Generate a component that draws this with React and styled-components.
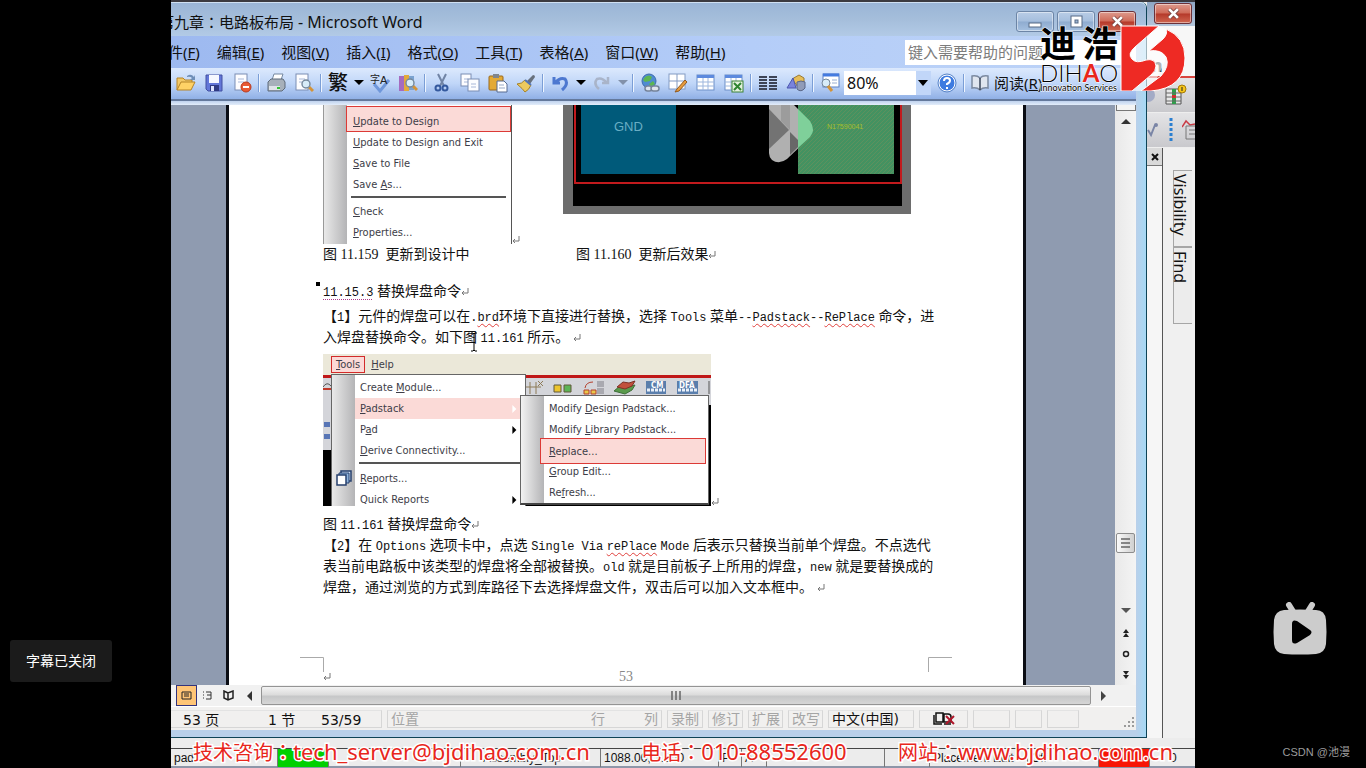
import React from 'react';
import styled, { createGlobalStyle, css } from 'styled-components';

const GlobalStyle = createGlobalStyle`
  * { box-sizing: border-box; }

  body {
    margin: 0;
    background: #000;
    font-family: 'Noto Sans', 'Noto Sans CJK SC', sans-serif;
    color: #111;
  }

  button, input, select { font: inherit; color: inherit; }
`

const songti = css`
  font-family: 'Liberation Serif', 'Noto Sans CJK SC', serif;
`

/* ---------- player ---------- */

const Player = styled.div`
  display: flex;
  min-height: 100vh;
  background: #000;
`

const Side = styled.aside`
  flex: 0 0 171px;
  display: flex;
  flex-direction: column;
  justify-content: flex-end;
  align-items: ${p => p.$right ? 'flex-end' : 'flex-start'};
  padding: ${p => p.$right ? '0 16px 8px 0' : '0 0 86px 10px'};
`

const SubtitleToast = styled.div`
  padding: 0 16px;
  line-height: 42px;
  border-radius: 3px;
  background: #1b1b1b;
  color: #fff;
  font-size: 14px;
`

const TvButton = styled.button`
  margin: 0 22px 88px 0;
  padding: 0;
  border: 0;
  background: none;
  line-height: 0;
`

const Credit = styled.div`
  color: #9b9b9b;
  font-family: 'Liberation Sans', 'Noto Sans CJK SC', sans-serif;
  font-size: 11px;
  line-height: 16px;
`

const Video = styled.main`
  position: relative;
  flex: 1;
  min-width: 0;
  display: grid;
  grid-template-columns: minmax(0, 1fr) 48px;
  grid-template-rows: minmax(0, 1fr) 30px;
  overflow: hidden;
  background: #f0f0f0;
  border-top: 2px solid #3b3a40;
`

/* ---------- word window ---------- */

const WordWindow = styled.section`
  display: flex;
  flex-direction: column;
  min-width: 0;
  padding: 0 10px 7px 0;
  border-right: 1px solid #0e4356;
  border-bottom: 1px solid #0e4356;
  border-top-right-radius: 6px;
  background: linear-gradient(90deg, #b9d0ea 99%, #a6d9f5 100%);
`

const TitleBar = styled.header`
  display: flex;
  justify-content: space-between;
  height: 34px;
  margin-right: -10px;
  padding-right: 10px;
  background: linear-gradient(#9ab5d6, #a5bedb 50%, #b2cae6);
  border-top: 1px solid #cfe0f2;
  border-top-right-radius: 6px;
`

const Title = styled.h1`
  margin: 0 0 0 -12px;
  font-family: 'Noto Sans', 'Noto Sans CJK TC', sans-serif;
  font-size: 15px;
  font-weight: 400;
  line-height: 38px;
  white-space: nowrap;

  span { font-size: 16px; }
`

const WindowButtons = styled.div`
  display: flex;
  gap: 3px;
  padding-top: 8px;
`

const WindowButton = styled.button`
  width: 38px;
  height: 21px;
  padding: 0;
  display: grid;
  place-items: center;
  border: 1px solid ${p => p.$close ? '#6b3139' : '#6c85a6'};
  border-radius: 3px;
  box-shadow: inset 0 0 0 1px rgba(255, 255, 255, .45);
  background: ${p => p.$close
    ? 'linear-gradient(#dd9a8d, #cf6a58 48%, #b5392a 52%, #cf6650)'
    : 'linear-gradient(#b9cde6, #a5bedd 48%, #8facd0 52%, #a5c0e0)'};
`

const MenuBar = styled.nav`
  display: flex;
  align-items: center;
  gap: 17px;
  height: 32px;
  background: linear-gradient(90deg, #9db9f0, #b4cdf8 60%, #bdd3f7);
`

const MenuItem = styled.button`
  flex: none;
  padding: 0;
  border: 0;
  background: none;
  font-size: 15px;
  line-height: 24px;
  white-space: nowrap;

  &:first-child { margin-left: -18px; }
`

const HelpInput = styled.input`
  width: 231px;
  height: 25px;
  margin-left: auto;
  padding: 0 3px;
  border: 0;
  background: #fff;
  font-size: 15px;

  &::placeholder { color: #7c7c7c; opacity: 1; }
`

const Toolbar = styled.div`
  display: flex;
  align-items: center;
  height: 31px;
  padding: 2px 0 4px 1px;
  background: linear-gradient(#dce9fd, #c0d6f8 50%, #90b0e6);
  overflow: hidden;
`

const ToolButton = styled.button`
  flex: none;
  width: ${p => p.$narrow ? '14px' : '28px'};
  height: 24px;
  padding: 0;
  display: grid;
  place-items: center;
  border: 0;
  background: none;
  font-size: 20px;
  font-weight: ${p => p.$heavy ? 500 : 400};
  line-height: 24px;
`

const Separator = styled.span`
  flex: none;
  width: 2px;
  height: 18px;
  margin: 0 2px;
  background: linear-gradient(90deg, #7b9ed6 50%, #eef5ff 50%);
`

const Zoom = styled.div`
  flex: none;
  display: flex;
  width: 87px;
  height: 24px;
  margin-right: 2px;
  position: relative;
  background: #fff;

  select {
    appearance: none;
    width: 100%;
    padding: 0 3px;
    border: 0;
    background: none;
    font-size: 16px;
    line-height: 22px;
  }

  svg {
    position: absolute;
    top: 0;
    right: 0;
    pointer-events: none;
  }
`

const ReadButton = styled(ToolButton)`
  width: auto;
  display: flex;
  align-items: center;
  gap: 4px;
  padding-left: 3px;
  font-size: 15px;
`

const ToolbarShade = styled.div`
  height: 6px;
  border-top: 2px solid #64799c;
  background: linear-gradient(#bfd2ee, #e3edfa);
`

const Workspace = styled.div`
  flex: 1;
  display: grid;
  grid-template-columns: 55px minmax(0, 1fr) 89px 21px;
  min-height: 580px;
  background: #8f9bb0;
`

const Page = styled.article`
  grid-column: 2;
  display: flex;
  flex-direction: column;
  padding: 0 93px 0 94px;
  border: solid #0b0d14;
  border-width: 0 3px;
  background: #fff;
`

const Figures = styled.div`
  display: grid;
  grid-template-columns: 240px 348px;
  height: 139px;
`

const Inline = styled.div`
  display: flex;
  align-items: flex-end;
`

const Spaced = styled(Inline)`
  padding-top: 6px;
`

const Captions = styled.div`
  display: grid;
  grid-template-columns: 253px 1fr;
  margin-bottom: 16px;
`

const Line = styled.p`
  ${songti}
  margin: ${p => p.$caption ? '8px 0 0' : '0'};
  font-size: 14px;
  line-height: 21px;
  white-space: nowrap;
  text-align: justify;
  text-align-last: ${p => p.$full ? 'justify' : 'left'};
`

const Heading = styled.h2`
  ${songti}
  position: relative;
  margin: 0 0 4px;
  font-size: 14px;
  font-weight: 400;
  line-height: 21px;

  &::before {
    content: '';
    position: absolute;
    left: -7px;
    top: 1px;
    width: 4px;
    height: 4px;
    background: #000;
  }
`

const En = styled.span`
  font-family: 'Liberation Mono', monospace;
  font-size: 12px;
  line-height: 12px;
  ${p => p.$wrong && css`
    text-decoration: underline wavy #e0403c 1px;
    text-underline-offset: 2px;
  `}
  ${p => p.$dotted && css`
    text-decoration: underline dotted #b03a8a 1px;
    text-underline-offset: 3px;
  `}
`

const CursorSpot = styled.span`
  position: relative;

  svg {
    position: absolute;
    left: 7px;
    top: 2px;
  }
`

const PageFooter = styled.footer`
  ${songti}
  display: flex;
  justify-content: space-between;
  height: 28px;
  margin: auto -22px 0 -23px;
  color: #888;
  font-size: 14px;

  span { line-height: 40px; }
`

/* ---------- pictures pasted into the page ---------- */

const Shot = styled.div`
  position: relative;
  width: ${p => p.$wide ? '388px' : '189px'};
  height: ${p => p.$wide ? '152px' : '139px'};
  overflow: hidden;
  font-family: 'DejaVu Sans Condensed', 'Noto Sans', sans-serif;
  font-size: 11px;
  color: #3d3d48;
`

const shotMenu = css`
  margin: 0;
  padding: 0;
  list-style: none;
  background: linear-gradient(90deg, #e9e9e9, #b4b4b6 23px, #fff 23px);
`

const ShotMenu = styled.ul`
  ${shotMenu}
  height: 139px;
  padding-top: 1px;
  border-left: 1px solid #999;
  border-right: 1px solid #555;
`

const ShotItem = styled.li`
  position: relative;
  display: flex;
  align-items: center;
  justify-content: space-between;
  height: 21px;
  padding: 0 7px 0 ${p => p.$inset || 29}px;

  /* icon in the grey gutter */
  > svg:first-child {
    position: absolute;
    left: 4px;
    top: 2px;
  }

  ${p => p.$framed && css`
    height: 26px;
    margin: ${p.$inset ? '-2px 2px -3px 19px' : '0 0 0 22px'};
    padding: ${p.$inset ? '0 0 0 8px' : '4px 0 0 6px'};
    background: #fbdad7;
    border: 1px solid #dc3a36;
  `}

  ${p => p.$tinted && css`
    background: linear-gradient(90deg, transparent 23px, #fbdad7 23px);
  `}
`

const ShotRule = styled.li`
  height: 2px;
  margin: ${p => p.$tight ? '1px 0 4px 27px' : '1px 5px 3px 27px'};
  background: #555;
`

const ShotBar = styled.div`
  display: flex;
  align-items: center;
  gap: 6px;
  height: 21px;
  padding-left: 8px;
  background: #ebe8d9;

  span { padding: 1px 0; }

  span:first-child {
    padding: 1px 4px;
    background: #fbdad7;
    border: 1px solid #d22a2a;
  }
`

const ShotTools = styled.div`
  height: 21px;
  border-top: 3px solid #c01818;
  background: #d4d5da;
`

const Dropped = styled.ul`
  ${shotMenu}
  position: absolute;
  left: 8px;
  top: 20px;
  width: 195px;
  height: 132px;
  padding-top: 2px;
  border: 1px solid #666;
  border-bottom: 0;
`

const Submenu = styled(Dropped)`
  left: 197px;
  top: 41px;
  width: 189px;
  height: 110px;
  border-bottom: 2px solid #444;
  background: linear-gradient(90deg, #f2f2f2, #b4b4b6 23px, #fff 23px);
`

/* ---------- scroll bars and status ---------- */

const VScroll = styled.div`
  display: grid;
  grid-template-rows: 6px 22px 1fr 20px 69px 21px 21px 21px;
  justify-items: center;
  align-items: center;
  background: linear-gradient(90deg, #e9e9e9, #f4f4f4);
`

const SplitBox = styled.div`
  width: 20px;
  height: 6px;
  border: 1px solid #777;
  border-top: 0;
  background: #f4f4f4;
`

const ScrollGlyph = styled.button`
  padding: 0;
  border: 0;
  background: none;
  line-height: 0;
`

const DownGlyph = styled(ScrollGlyph)`
  align-self: end;
  margin-bottom: 6px;
`

const VThumb = styled.div`
  display: grid;
  place-items: center;
  width: 19px;
  height: 20px;
  border: 1px solid #8c8c8c;
  border-radius: 2px;
  background: linear-gradient(90deg, #fafafa, #d0d0d0);
`

const HScroll = styled.div`
  display: grid;
  grid-template-columns: 21px 21px 21px 22px minmax(0, 1fr) 24px 21px;
  align-items: center;
  justify-items: center;
  height: 21px;
  padding-left: 5px;
  background: #f1f1f1;
`

const ViewButton = styled(ScrollGlyph)`
  display: grid;
  place-items: center;
  width: 21px;
  height: 21px;
  ${p => p.$on && 'background: #ffc576; border: 1px solid #33337c;'}
`

const HThumb = styled.div`
  display: grid;
  place-items: center;
  width: 100%;
  height: 19px;
  border: 1px solid #949494;
  border-radius: 2px;
  background: linear-gradient(#f3f3f3, #dcdcdc 45%, #c6c7c8 55%, #d6d6d6);
`

const StatusBar = styled.footer`
  display: flex;
  align-items: center;
  gap: 5px;
  height: 24px;
  padding-right: 1px;
  background: #f1f0ef;
  border-top: 1px solid #fff;
  font-family: 'DejaVu Sans', 'Noto Sans CJK SC', sans-serif;
  font-size: 14px;
`

const Cell = styled.div`
  flex: ${p => p.$grow ? '1' : 'none'};
  display: flex;
  justify-content: ${p => p.$spread ? 'space-between' : 'flex-start'};
  align-items: center;
  width: ${p => p.$w ? `${p.$w}px` : 'auto'};
  height: 18px;
  padding: 0 3px;
  border: 1px solid #d6d6d6;
  border-top-color: #e3e3e3;
  line-height: 18px;
  white-space: nowrap;
  color: ${p => p.$off ? '#a5a5a5' : '#111'};

  svg { margin: 0 auto; }
`

const PlaceCell = styled(Cell)`
  display: grid;
  grid-template-columns: 85px 53px 1fr;
  padding-left: 12px;
  border-left: 0;
`

const StatusPair = styled.span`
  display: flex;
  gap: 39px;
`

const GripSpace = styled.div`
  display: flex;
  flex: none;
  width: 51px;
  height: 23px;
`

const Grip = styled.div`
  margin: auto 0 2px auto;
  line-height: 0;
`

/* ---------- the cad program behind ---------- */

const CadSide = styled.section`
  display: flex;
  flex-direction: column;
  background: #f0f0f0;
`

const CadTitle = styled.div`
  height: 24px;
  padding: 1px 3px 0 7px;
  background: linear-gradient(#8ea6c4, #b4c6dc);
`

const CadHead = styled.div`
  height: 52px;
  padding: 30px 0 0 4px;
  background: #f7f7f7;
  border-bottom: 2px solid #d8453f;
  color: #444;
  font-size: 18px;
  font-weight: 700;
  line-height: 18px;
`

const CadTools = styled.div`
  display: flex;
  align-items: center;
  justify-content: space-between;
  height: 35px;
  padding-right: ${p => p.$flush ? '0' : '8px'};
  background: linear-gradient(#e4e4e6, #c9c9cd);
  border-bottom: 1px solid #eee;
`

const CadDock = styled.div`
  flex: 1;
  display: grid;
  grid-template-columns: 16px 1fr;
`

const DockEdge = styled.div`
  border-right: 1px solid #555;
  background: #f6f6f6;

  button {
    display: grid;
    place-items: center;
    width: 15px;
    height: 18px;
    padding: 0;
    border: 0;
    border-bottom: 1px solid #777;
    background: #d9d9d9;
  }
`

const DockTabs = styled.div`
  display: flex;
  flex-direction: column;
  align-items: flex-start;
  padding: 22px 0 0 10px;
`

const DockTab = styled.button`
  display: flex;
  width: 19px;
  height: 77px;
  padding: 3px 6px 0 0;
  border: 1px solid #a6a6a6;
  border-right: 0;
  background: #ececec;
  font-size: 16px;
  line-height: 12px;
  text-align: left;
  writing-mode: vertical-rl;
`

const CadStatus = styled.footer`
  grid-column: 1 / -1;
  padding-top: 10px;
  background: #ececec;
  border-bottom: 2px solid #8e96a8;
`

const CadCells = styled.div`
  display: grid;
  grid-template-columns: 107px 51px 132px 140px 118px 23px 25px 118px 45px 98px 71px 51px 1fr;
  height: 18px;
  border-top: 1px solid #444;
  font-family: 'Liberation Sans', sans-serif;
  font-size: 12px;
  line-height: 18px;

  span {
    padding-left: 3px;
    border-right: 1px solid #777;
    white-space: nowrap;
  }

  span:nth-child(2) { background: #00d000; }
  span:nth-child(4) { padding-left: 22px; }
  span:nth-child(12) { background: #f81505; }
  span:nth-child(13) { padding-left: 20px; border: 0; }
`

/* ---------- broadcaster overlay ---------- */

const Ticker = styled.div`
  position: absolute;
  left: 22px;
  right: 22px;
  bottom: 0;
  display: flex;
  justify-content: space-between;
  color: #e8261c;
  font-family: 'Noto Sans CJK TC', 'Noto Sans CJK SC', sans-serif;
  font-size: 20px;
  line-height: 32px;
  white-space: nowrap;
  -webkit-text-stroke: 3px #fff;
  paint-order: stroke fill;

  span {
    font-family: 'Noto Sans', sans-serif;
    font-size: 22px;
  }
`

const Brand = styled.div`
  position: absolute;
  top: 23px;
  right: 9px;
  display: flex;
  gap: 2px;
`

const BrandText = styled.div`
  width: 78px;
  color: #000;
  white-space: nowrap;
  paint-order: stroke fill;
  -webkit-text-stroke: 1px #fff;
`

const BrandName = styled.div`
  display: flex;
  justify-content: space-between;
  font-size: 36px;
  font-weight: 700;
  line-height: 38px;
`

const BrandLatin = styled.div`
  font-family: 'Lato', sans-serif;
  font-size: 24px;
  font-weight: 300;
  line-height: 20px;

  i { color: #e8261c; font-style: normal; font-weight: 700; }
`

const BrandLine = styled.div`
  font-family: 'Lato', sans-serif;
  font-size: 9px;
  line-height: 10px;
`

/* ---------- icons ---------- */

const Svg = ({ size = 20, w, h, vb, children }) => (
  <svg width={w || size} height={h || size} viewBox={vb || '0 0 20 20'} fill='none' aria-hidden='true'>
    {children}
  </svg>
)

const Sheet = ({ x = 3, y = 1, w = 12, h = 16 }) => (
  <g>
    <rect x={x} y={y} width={w} height={h} fill='#fdfdff' stroke='#7b8db4' />
    <path d={`M${x + 3} ${y + 5}h${w - 6}M${x + 3} ${y + 8}h${w - 6}`} stroke='#a9b8d8' />
  </g>
)

const Lens = ({ x, y }) => (
  <g>
    <path d={`M${x + 3} ${y + 3}l4 4`} stroke='#d39338' strokeWidth='3' />
    <circle cx={x} cy={y} r='4' fill='#d8ecf8' stroke='#75889b' strokeWidth='1.4' />
  </g>
)

const Grid = () => (
  <g>
    <rect x='1' y='2' width='17' height='15' fill='#fff' stroke='#6d8fc8' />
    <rect x='1' y='2' width='17' height='3' fill='#5d8ade' />
    <path d='M1 9h17M1 13h17M7 5v12M12 5v12' stroke='#9db6dd' />
  </g>
)

const icons = {
  open: <><path d='M1 17V5h6l2 2h7v4' fill='#f3c968' stroke='#b58427' /><path d='M1 17l4-8h14l-4 8z' fill='#ffd266' stroke='#b58427' /><path d='M11 3q4-3 7 1l1-2v5h-5l2-2q-2-2-5-1z' fill='#6f8fb8' /></>,
  save: <><path d='M2 2h16v16H4l-2-2z' fill='#6377d8' stroke='#4351a1' /><path d='M5 2h10v8H5z' fill='#f5f8ff' /><path d='M6 12h9v6H6z' fill='#2f3a82' /><path d='M7 13h3v5H7z' fill='#dbe2ff' /></>,
  permission: <><Sheet /><circle cx='14' cy='14' r='5' fill='#e95a34' stroke='#b83a1f' /><path d='M11 14h6' stroke='#fff' strokeWidth='2' /></>,
  print: <><path d='M6 7l2-6h9l-2 6' fill='#fff' stroke='#74879f' /><path d='M2 9l3-3h12l2 3v6l-3 3H2z' fill='#a7b0ba' stroke='#5e6b7a' /><path d='M3 13h11v4H3z' fill='#dfe4e8' /><path d='M11 14h3v2h-3z' fill='#34c435' /></>,
  preview: <><Sheet x={2} /><Lens x={12} y={11} /></>,
  convert: (
    <>
      <path d='M4 11l6 7 9-11' stroke='#6f97da' strokeWidth='3' />
      <text x='0' y='10' fill='#222' fontSize='10' fontFamily='Noto Sans CJK SC'>字</text>
      <text x='10' y='11' fill='#222' fontSize='11' fontFamily='Liberation Sans'>A</text>
    </>
  ),
  research: <><path d='M1 3h5v15H1z' fill='#a56bc0' /><path d='M6 2h5v16H6z' fill='#e2a93c' /><path d='M11 3h5v14h-5z' fill='#7aa2d0' /><Lens x={12} y={10} /></>,
  cut: <><path d='M6 1l6 12M14 1L8 13' stroke='#7184a5' strokeWidth='2' /><circle cx='6' cy='15' r='2.5' stroke='#34599e' strokeWidth='2' /><circle cx='13' cy='15' r='2.5' stroke='#34599e' strokeWidth='2' /></>,
  copy: <><Sheet x={1} y={1} w={10} h={12} /><Sheet x={8} y={6} w={11} h={12} /></>,
  paste: <><rect x='1' y='3' width='14' height='14' rx='1' fill='#e3aa36' stroke='#99691d' /><path d='M5 1h6v4H5z' fill='#80868d' /><path d='M9 8h7l3 3v8H9z' fill='#fff' stroke='#566b91' /><path d='M11 12h5M11 15h6' stroke='#97a9c5' /></>,
  brush: <><path d='M11 8l6-6q2 0 2 2l-5 7z' fill='#68717c' /><path d='M1 11q5 0 8-4l6 5q-2 5-6 7-2-3-8-8z' fill='#edca5e' stroke='#a78226' /><path d='M9 7l6 5' stroke='#5375b7' strokeWidth='2' /></>,
  undo: <path d='M4 4v6h6M5 10q5-6 10-4 4 5-3 11' stroke='#4d78d0' strokeWidth='3' />,
  redo: <path d='M16 4v6h-6M15 10q-5-6-10-4-4 5 2 10' stroke='#a9b4c9' strokeWidth='2.5' />,
  link: <><circle cx='9' cy='8' r='7' fill='#4f8bd2' stroke='#3c6cac' /><path d='M5 4q4-3 7 0l-2 4-5 1-2-2zM9 11l4-3 2 3-4 3z' fill='#5cb653' /><rect x='5' y='13' width='7' height='5' rx='2.5' fill='#dfe5ee' stroke='#75839a' strokeWidth='1.5' /><rect x='11' y='13' width='8' height='5' rx='2.5' fill='#dfe5ee' stroke='#75839a' strokeWidth='1.5' /></>,
  draw: <><rect x='1' y='1' width='16' height='15' fill='#fff' stroke='#839bc3' /><path d='M1 8h16M9 1v15' stroke='#839bc3' /><path d='M9 16l8-9 2 2-8 9-4 1z' fill='#e79b3c' stroke='#925b21' /></>,
  table: <Grid />,
  excel: <><Grid /><rect x='8' y='8' width='11' height='11' fill='#e4f2df' stroke='#3a8237' /><path d='M10 10l7 7M17 10l-7 7' stroke='#2e8430' strokeWidth='2' /></>,
  columns: <path d='M1 4h8M1 7h8M1 10h8M1 13h8M1 16h8M11 4h8M11 7h8M11 10h8M11 13h8M11 16h8' stroke='#3d4456' strokeWidth='2' />,
  shapes: <><path d='M6 6l7-4 5 3v6l-6 3z' fill='#e6bd58' stroke='#9a7b34' /><path d='M1 15L7 5l3 10z' fill='#7a84dc' stroke='#4c57b0' /><path d='M11 9q4-2 8 0v6q-4 5-8 1z' fill='#909bb8' stroke='#5a6788' /></>,
  map: <><rect x='3' y='1' width='16' height='13' fill='#fff' stroke='#5d82c5' /><path d='M3 2h16' stroke='#447be0' strokeWidth='3' /><path d='M12 7h5M12 10h5' stroke='#99aed2' /><circle cx='6' cy='10' r='4' fill='#d8ecf8' stroke='#75889b' /><path d='M8 13l4 5' stroke='#d39338' strokeWidth='3' /></>,
  help: <><circle cx='10' cy='10' r='8' fill='#3e7be0' stroke='#fff' /><circle cx='10' cy='10' r='9' stroke='#5b86c8' /><path d='M7 8q0-3 3-3t3 2.5q0 2-3 3.5v1M10 14v2' stroke='#fff' strokeWidth='2' /></>,
  book: <><path d='M10 5q-3-3-8-2v12q5-1 8 2 3-3 8-2V3q-5-1-8 2z' fill='#dfe5ef' stroke='#7b89a0' strokeWidth='1.5' /><path d='M10 5v12' stroke='#39455a' strokeWidth='1.5' /></>,
}

const Icon = ({ name }) => <Svg>{icons[name]}</Svg>

const tris = {
  down: 'M0 2h10L5 7z',
  up: 'M0 7h10L5 2z',
  left: 'M7 0v10L2 5z',
  right: 'M3 0v10l5-5z',
}

const Tri = ({ dir = 'down', color = '#000', s = 10 }) => (
  <Svg size={s} vb='0 0 10 10'><path d={tris[dir]} fill={color} /></Svg>
)

const Pilcrow = () => (
  <Svg size={8} vb='0 0 8 8'><path d='M7 0v5H1M3 3L1 5l2 2' stroke='#777' /></Svg>
)

const Cross = () => (
  <Svg size={13} vb='0 0 12 12'>
    <path d='M2 2l8 8M10 2l-8 8' stroke='#7a4440' strokeWidth='4' />
    <path d='M2 2l8 8M10 2l-8 8' stroke='#fff' strokeWidth='2.5' />
  </Svg>
)

const DoubleArrow = ({ flip }) => (
  <Svg size={8} vb='0 0 8 8'>
    <path d={flip ? 'M1 0h6L4 4zM1 4h6L4 8z' : 'M1 4h6L4 0zM1 8h6L4 4z'} fill='#222' />
  </Svg>
)

const BoardPicture = () => (
  <svg width='348' height='109' viewBox='0 0 348 109' role='img' aria-label='GND'>
    <defs>
      <pattern id='hatch' width='4' height='4' patternUnits='userSpaceOnUse'>
        <path d='M0 4L4 0' stroke='#77905a' strokeWidth='1' />
      </pattern>
    </defs>
    <path d='M0 0h348v109H0z' fill='#6d6d6d' />
    <path d='M10 0h329v101H10z' fill='#000' />
    <path d='M12 0v78h326V0' fill='none' stroke='#c11a1d' strokeWidth='2' />
    <path d='M18 0h95v69H18z' fill='#005a7a' />
    <path d='M206 0h25l16 16q6 9 0 16l-23 22q-8 6-15 1-3-3-3-7z' fill='#b0b0b0' />
    <path d='M206 4l20 21-20 19z' fill='#737373' />
    <path d='M227 27l9 9v5l-9 9z' fill='#686868' />
    <path d='M218 0h9v25l-9-9z' fill='#9c9c9c' />
    <path d='M235 0h96v69h-96z' fill='#439261' />
    <path d='M235 0h96v69h-96z' fill='url(#hatch)' opacity='.5' />
    <path d='M235 4l12 12q6 9 0 16l-12 11z' fill='#7fd09a' />
    <text x='51' y='26' fill='#69aec4' fontFamily='Liberation Sans' fontSize='13'>GND</text>
    <text x='264' y='24' fill='#a8bf2c' fontFamily='Liberation Sans' fontSize='7'>N17590041</text>
  </svg>
)

const ShotToolIcons = () => (
  <svg width='388' height='18' viewBox='0 0 388 18' aria-hidden='true'>
    <path d='M202 9h16M207 4v12M213 4v12M215 3l5 5M220 3l-5 5' stroke='#8d7a56' />
    <path d='M231 7h7v7h-7z' fill='#edc52e' stroke='#60583a' />
    <path d='M241 7h7v7h-7z' fill='#5db455' stroke='#60583a' />
    <path d='M262 10q1-6 8-6' stroke='#b5402c' fill='none' />
    <path d='M261 12h5v4h-5zM268 12h5v4h-5z' stroke='#b5402c' fill='#e9c84a' />
    <path d='M274 3h7v6h-7zM274 10h7v6h-7z' fill='#a9a9b0' />
    <path d='M291 13l6-5 8 1 7-2-3 5-7 4z' fill='#5a9a4c' stroke='#3f6f3a' />
    <path d='M294 9l6-5 6 1 6-2-3 5-7 3z' fill='#c2503c' stroke='#7d3227' />
    <path d='M323 3h20v13h-20z' fill='#5a7eac' />
    <path d='M354 3h21v13h-21z' fill='#5a7eac' />
    <path d='M324 12h18M355 12h19' stroke='#e9f0f9' strokeWidth='3' strokeDasharray='3 1' />
    <text x='328' y='10' fill='#fff' fontSize='8' fontWeight='700'>CM</text>
    <text x='356' y='10' fill='#fff' fontSize='8' fontWeight='700'>DFA</text>
    <path d='M386 3v13M0 9q4-6 8-1' stroke='#555' fill='none' />
    <path d='M0 11h8' stroke='#c0392b' strokeWidth='2' />
  </svg>
)

const BrandMark = () => (
  <Svg w={66} h={66} vb='-1 -1 66 66'>
    <path d='M38 0L14 21q-8 7-3 12 4 5 14 1 9-2 10 6 0 5-5 9L11 65h19l14-30 1-32z' fill='#fff' opacity='.6' />
    <g fill='#ee2a24' stroke='#fff' strokeWidth='1'>
      <path d='M0 0h38L14 21q-8 7-3 12 4 5 14 1 9-2 10 6 0 5-5 9L11 65H0z' />
      <path d='M45 3q19 8 19 29 0 30-34 33H20l20-15q9-10 5-19-5-8-17-6L42 13q5-5 3-10z' />
    </g>
  </Svg>
)

/* ---------- page parts ---------- */

const menus = [['文件', 'F'], ['编辑', 'E'], ['视图', 'V'], ['插入', 'I'], ['格式', 'O'],
  ['工具', 'T'], ['表格', 'A'], ['窗口', 'W'], ['帮助', 'H']]

const tools = ['open', 'save', 'permission', '|', 'print', 'preview', '|', '繁', 'v', 'convert', 'research', '|',
  'cut', 'copy', 'paste', 'brush', '|', 'undo', 'v', 'redo', 'x', '|', 'link', 'draw', 'table', 'excel', '|',
  'columns', 'shapes', '|', 'map']

const Tool = ({ name }) => {
  if (name === '|') return <Separator />
  if (name === 'v' || name === 'x') {
    return <ToolButton $narrow aria-label='more'><Tri color={name === 'v' ? '#000' : '#8291aa'} /></ToolButton>
  }
  if (name === '繁') return <ToolButton $heavy>繁</ToolButton>
  return <ToolButton aria-label={name}><Icon name={name} /></ToolButton>
}

// underlines the letter marked with &
const Key = ({ text }) => {
  const [before, after] = text.split('&')
  return <span>{before}{after && <u>{after[0]}</u>}{after && after.slice(1)}</span>
}

const WordHeader = () => (
  <>
    <TitleBar>
      <Title>第九章：电路板布局 <span>- Microsoft Word</span></Title>
      <WindowButtons>
        <WindowButton aria-label='minimize'><Svg w={14} h={12} vb='0 0 14 12'><rect x='1' y='7' width='12' height='4' fill='#fff' stroke='#566a85' /></Svg></WindowButton>
        <WindowButton aria-label='maximize'><Svg size={13} vb='0 0 13 13'><rect x='1' y='1' width='11' height='11' fill='#fff' stroke='#566a85' /><rect x='5' y='5' width='3' height='3' fill='#9cb5d4' stroke='#566a85' /></Svg></WindowButton>
        <WindowButton $close aria-label='close'><Cross /></WindowButton>
      </WindowButtons>
    </TitleBar>
    <MenuBar>
      {menus.map(([name, key]) => <MenuItem key={key}>{name}(<u>{key}</u>)</MenuItem>)}
      <HelpInput aria-label='help' placeholder='键入需要帮助的问题' />
    </MenuBar>
    <Toolbar>
      {tools.map((name, i) => <Tool key={i} name={name} />)}
      <Zoom>
        <select aria-label='zoom' defaultValue='80%'><option>80%</option></select>
        <Svg w={15} h={24} vb='0 0 15 24'><path d='M0 0h15v24H0z' fill='#c1d6f8' /><path d='M2 9h10l-5 6z' fill='#000' /></Svg>
      </Zoom>
      <ToolButton aria-label='help'><Icon name='help' /></ToolButton>
      <Separator />
      <ReadButton><Icon name='book' /><span>阅读(<u>R</u>)</span></ReadButton>
    </Toolbar>
    <ToolbarShade />
  </>
)

const UpdateMenu = () => (
  <Shot>
    <ShotMenu>
      <ShotItem $framed><Key text='&Update to Design' /></ShotItem>
      <ShotItem><Key text='&Update to Design and Exit' /></ShotItem>
      <ShotItem><Key text='&Save to File' /></ShotItem>
      <ShotItem><Key text='Save &As...' /></ShotItem>
      <ShotRule />
      <ShotItem><Key text='&Check' /></ShotItem>
      <ShotItem><Key text='&Properties...' /></ShotItem>
    </ShotMenu>
  </Shot>
)

const ToolsMenu = () => (
  <Shot $wide>
    <ShotBar><Key text='&Tools' /><Key text='&Help' /></ShotBar>
    <ShotTools><ShotToolIcons /></ShotTools>
    <Svg w={388} h={110} vb='0 0 388 110'>
      <path d='M0 0h388v54H0z' fill='#d4d5da' />
      <path d='M0 54h388v56H0zM386 9h2v90h-2z' fill='#000' />
      <path d='M1 26h6v5H1zM1 38h6v5H1z' fill='#5875b5' />
    </Svg>
    <Dropped>
      <ShotItem $inset={28}><Key text='Create &Module...' /></ShotItem>
      <ShotItem $inset={28} $tinted><Key text='&Padstack' /><Tri dir='right' color='#fff' s={8} /></ShotItem>
      <ShotItem $inset={28}><Key text='P&ad' /><Tri dir='right' s={8} /></ShotItem>
      <ShotItem $inset={28}><Key text='&Derive Connectivity...' /></ShotItem>
      <ShotRule $tight />
      <ShotItem $inset={28}>
        <Svg size={16} vb='0 0 16 16'>
          <path d='M5 1h10v10H5z' fill='#cfe0f5' stroke='#27406e' strokeWidth='1.5' />
          <path d='M3 3h10v10H3z' fill='#8fb4dd' stroke='#27406e' />
          <path d='M1 5h9v10H1z' fill='#fff' stroke='#27406e' strokeWidth='1.5' />
        </Svg>
        <Key text='&Reports...' />
      </ShotItem>
      <ShotItem $inset={28}><Key text='Quick Reports' /><Tri dir='right' s={8} /></ShotItem>
    </Dropped>
    <Submenu>
      <ShotItem $inset={28}><Key text='Modify &Design Padstack...' /></ShotItem>
      <ShotItem $inset={28}><Key text='Modify &Library Padstack...' /></ShotItem>
      <ShotItem $inset={28} $framed><Key text='&Replace...' /></ShotItem>
      <ShotItem $inset={28}><Key text='&Group Edit...' /></ShotItem>
      <ShotItem $inset={28}><Key text='Re&fresh...' /></ShotItem>
    </Submenu>
  </Shot>
)

const Document = () => (
  <Page>
    <Figures>
      <Inline><UpdateMenu /><Pilcrow /></Inline>
      <BoardPicture />
    </Figures>
    <Captions>
      <Line>图 11.159&nbsp; 更新到设计中</Line>
      <Line>图 11.160&nbsp; 更新后效果<Pilcrow /></Line>
    </Captions>
    <Heading><En $dotted>11.15.3</En> 替换焊盘命令<Pilcrow /></Heading>
    <Line $full>【<En>1</En>】元件的焊盘可以在<En>.</En><En $wrong>brd</En>环境下直接进行替换，选择 <En>Tools</En> 菜单<En>--</En><En $wrong>Padstack</En><En>--</En><En $wrong>RePlace</En> 命令，进</Line>
    <Line>
      入焊盘替换命令。如下
      <CursorSpot>图<Svg w={9} h={20} vb='0 0 9 20'><path d='M1 1h2l1 1 1-1h2M4 2v16M1 19h2l1-1 1 1h2' stroke='#000' /></Svg></CursorSpot>
      {' '}<En>11.161</En> 所示。 <Pilcrow />
    </Line>
    <Spaced><ToolsMenu /><Pilcrow /></Spaced>
    <Line $caption>图 <En>11.161</En> 替换焊盘命令<Pilcrow /></Line>
    <Line $full>【<En>2</En>】在 <En>Options</En> 选项卡中，点选 <En>Single Via</En> <En $wrong>rePlace</En> <En>Mode</En> 后表示只替换当前单个焊盘。不点选代</Line>
    <Line $full>表当前电路板中该类型的焊盘将全部被替换。<En>old</En> 就是目前板子上所用的焊盘，<En>new</En> 就是要替换成的</Line>
    <Line>焊盘，通过浏览的方式到库路径下去选择焊盘文件，双击后可以加入文本框中。 <Pilcrow /></Line>
    <PageFooter>
      <Svg w={34} h={26} vb='0 0 34 26'><path d='M0 .5h23.5V15' stroke='#aaa' /><path d='M30 16v5h-6M26 19l-2 2 2 2' stroke='#777' /></Svg>
      <span>53</span>
      <Svg w={34} h={26} vb='0 0 34 26'><path d='M34 .5H10.5V15' stroke='#aaa' /></Svg>
    </PageFooter>
  </Page>
)

const WordFooter = () => (
  <>
    <HScroll>
      <ViewButton $on aria-label='page view'><Svg size={11} vb='0 0 11 11'><path d='M1 2h9v7H1zM3 4h5M3 6h5' stroke='#222' /></Svg></ViewButton>
      <ViewButton aria-label='outline'><Svg size={11} vb='0 0 11 11'><path d='M1 2h1M1 5h1M1 8h1M4 2h5v7H4M5 5h4' stroke='#333' /></Svg></ViewButton>
      <ViewButton aria-label='reading'><Svg size={11} vb='0 0 11 11'><path d='M5 3L1 1v7l4 2 5-2V1zM5 3v7' stroke='#222' strokeWidth='1.5' /></Svg></ViewButton>
      <ScrollGlyph aria-label='left'><Tri dir='left' color='#333' /></ScrollGlyph>
      <HThumb><Svg w={11} h={9} vb='0 0 11 9'><path d='M1 0v9M5 0v9M9 0v9' stroke='#666' strokeWidth='1.5' /></Svg></HThumb>
      <ScrollGlyph aria-label='right'><Tri dir='right' color='#444' /></ScrollGlyph>
    </HScroll>
    <StatusBar>
      <PlaceCell $w={211}><span>53 页</span><span>1 节</span><span>53/59</span></PlaceCell>
      <Cell $grow $spread $off><span>位置</span><StatusPair><span>行</span><span>列</span></StatusPair></Cell>
      <Cell $off $w={36}>录制</Cell>
      <Cell $off $w={35}>修订</Cell>
      <Cell $off $w={35}>扩展</Cell>
      <Cell $off $w={35}>改写</Cell>
      <Cell $w={86}>中文(中国)</Cell>
      <Cell $w={49}>
        <Svg w={22} h={14} vb='0 0 22 14'><path d='M1 3v9h8M3 1h7v9H3zM11 2h4q3 0 3 3v5h-7zM11 12h7' stroke='#111' strokeWidth='1.5' /><path d='M13 4l8 8M21 4l-8 8' stroke='#b0182c' strokeWidth='2' /></Svg>
      </Cell>
      <Cell $w={37} /><Cell $w={27} /><Cell $w={32} />
      <GripSpace><Grip><Svg size={11} vb='0 0 11 11'><path d='M8 0h2v2H8zM8 4h2v2H8zM8 8h2v2H8zM4 4h2v2H4zM4 8h2v2H4zM0 8h2v2H0z' fill='#9a9a9a' /></Svg></Grip></GripSpace>
    </StatusBar>
  </>
)

const Cad = () => (
  <CadSide>
    <CadTitle><WindowButton $close aria-label='close'><Cross /></WindowButton></CadTitle>
    <CadHead>n</CadHead>
    <CadTools>
      <Svg w={10} h={20} vb='0 0 10 20'><circle cx='1' cy='10' r='7' fill='#a3abc6' /></Svg>
      <Svg w={22} h={22} vb='0 0 22 22'>
        <path d='M1 5h15v15H1z' fill='#e8e8e8' stroke='#555' /><path d='M7 5h4v15H7z' fill='#2f9e4a' /><path d='M1 9h15M1 13h15M1 17h15' stroke='#666' />
        <path d='M7 11h4v3H7z' fill='#d13030' /><circle cx='17' cy='5' r='4' fill='#f6c51c' stroke='#a37a08' /><path d='M17 3v4' stroke='#222' />
      </Svg>
    </CadTools>
    <CadTools $flush>
      <Svg w={12} h={20} vb='0 0 12 20'><path d='M1 10l3 5 4-10' stroke='#7a85a6' strokeWidth='2' /><circle cx='9' cy='5' r='2' fill='#7a85a6' /></Svg>
      <Svg w={4} h={24} vb='0 0 4 24'><path d='M2 0v24' stroke='#2b7fd0' strokeWidth='3' strokeDasharray='3 2' /></Svg>
      <Svg w={13} h={22} vb='0 0 13 22'><path d='M0 8l4-6 4 4 5-1' stroke='#c93a44' strokeWidth='1.5' /><path d='M4 20V7h9M4 20h9M7 11h6M7 15h6' stroke='#777' /></Svg>
    </CadTools>
    <CadDock>
      <DockEdge><button aria-label='close panel'><Svg size={8} vb='0 0 8 8'><path d='M1 1l6 6M7 1L1 7' stroke='#111' strokeWidth='2' /></Svg></button></DockEdge>
      <DockTabs><DockTab>Visibility</DockTab><DockTab>Find</DockTab></DockTabs>
    </CadDock>
  </CadSide>
)

const App = () => (
  <>
    <GlobalStyle />
    <Player>
      <Side><SubtitleToast>字幕已关闭</SubtitleToast></Side>
      <Video>
        <WordWindow>
          <WordHeader />
          <Workspace>
            <Document />
            <span />
            <VScroll>
              <SplitBox />
              <ScrollGlyph aria-label='up'><Tri dir='up' color='#333' /></ScrollGlyph>
              <span />
              <VThumb><Svg w={9} h={11} vb='0 0 9 11'><path d='M0 1h9M0 5h9M0 9h9' stroke='#666' strokeWidth='1.5' /></Svg></VThumb>
              <DownGlyph aria-label='down'><Tri color='#555' /></DownGlyph>
              <ScrollGlyph aria-label='previous page'><DoubleArrow /></ScrollGlyph>
              <ScrollGlyph aria-label='browse'><Svg size={8} vb='0 0 8 8'><circle cx='4' cy='4' r='2.5' stroke='#222' strokeWidth='1.5' /></Svg></ScrollGlyph>
              <ScrollGlyph aria-label='next page'><DoubleArrow flip /></ScrollGlyph>
            </VScroll>
          </Workspace>
          <WordFooter />
        </WordWindow>
        <Cad />
        <CadStatus>
          <CadCells>
            <span>pad</span><span /><span /><span>Assembly_Top</span><span>1088.00, 1.800</span>
            <span>P</span><span>A</span><span /><span /><span>Placement Edit</span><span>Off</span><span /><span>0</span>
          </CadCells>
        </CadStatus>
        <Ticker>
          <div>技术咨询：<span>tech_server@bjdihao.com.cn</span></div>
          <div>电话：<span>010-88552600</span></div>
          <div>网站：<span>www.bjdihao.com.cn</span></div>
        </Ticker>
        <Brand>
          <BrandText>
            <BrandName><span>迪</span><span>浩</span></BrandName>
            <BrandLatin>DIH<i>A</i>O</BrandLatin>
            <BrandLine>Innovation Services</BrandLine>
          </BrandText>
          <BrandMark />
        </Brand>
      </Video>
      <Side $right>
        <TvButton aria-label='play'>
          <Svg w={56} h={54} vb='0 0 56 54'>
            <path d='M17 3l5 8M40 3l-5 8' stroke='#ccc' strokeWidth='6' strokeLinecap='round' />
            <path d='M12 8q16-1 32 0 9 0 10 10 1 12 0 24-1 9-10 10-16 1-32 0-9-1-10-10-1-12 0-24 1-9 10-10z' fill='#ccc' />
            <path d='M20 22q0-5 5-3l13 9q3 2 0 5l-13 8q-5 2-5-3z' fill='#000' />
          </Svg>
        </TvButton>
        <Credit>CSDN @池漫</Credit>
      </Side>
    </Player>
  </>
)

export default App
